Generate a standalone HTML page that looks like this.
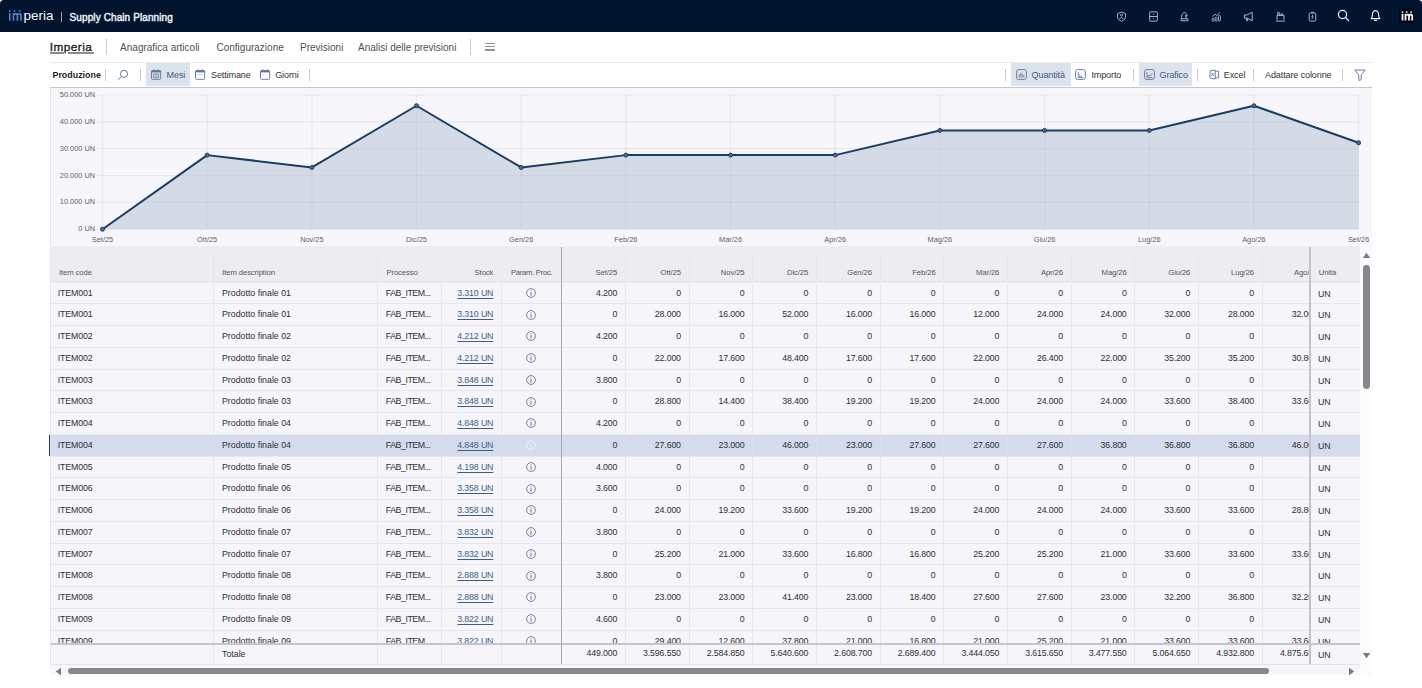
<!DOCTYPE html>
<html><head><meta charset="utf-8"><title>Supply Chain Planning</title>
<style>
*{box-sizing:border-box;margin:0;padding:0}
html,body{width:1422px;height:688px;overflow:hidden;background:#fff;font-family:"Liberation Sans",sans-serif;color:#2b2b2e}
.abs{position:absolute}
#hdr{position:absolute;left:0;top:0;width:1422px;height:31.6px;background:#03142e;border-radius:4px 4px 0 0}
.t{position:absolute;white-space:nowrap;line-height:1}
.hi{position:absolute;top:10px;width:12px;height:12px}
.vsep{position:absolute;width:1px;background:#c9c8cd}
.tb{position:absolute;top:62.8px;height:23.4px;background:#dde3ec}
.chartbox{position:absolute;left:50px;top:88px;width:1322px;height:157.4px;background:#f7f6fa}
.cl{position:absolute;font-size:7.4px;color:#5f5f64;white-space:nowrap;line-height:1}
.clip{position:absolute;overflow:hidden}
.cell{position:absolute;white-space:nowrap;line-height:1;font-size:8.8px;letter-spacing:-0.15px;color:#303034}
.hc{position:absolute;white-space:nowrap;line-height:1;font-size:7.7px;letter-spacing:-0.1px;color:#55555b}
.num{text-align:right;width:90px}
.lnk{color:#3d5e84;text-decoration:underline;text-underline-offset:1.5px;text-decoration-thickness:0.8px}
.hl{position:absolute;height:1px;background:#e8e7ec}
.vl{position:absolute;width:1px;background:#e8e7ec}
.info{position:absolute;width:10px;height:10px}
</style></head><body>

<div id="hdr">
<svg class="abs" style="left:8px;top:9px" width="16" height="13" viewBox="0 0 16 13"><g fill="#5a87c6"><rect x="1" y="4" width="1.5" height="7.7"/><circle cx="1.75" cy="1.9" r="0.85"/><path d="M4.7 11.7 V4 H6.3 V4.8 C7 4 8.6 3.8 9.4 4.5 C10.2 3.8 12.2 3.8 13 4.5 C13.7 5.1 13.8 5.8 13.8 6.6 V11.7 H12.2 V6.8 C12.2 5.4 10.2 5.4 10.2 6.8 V11.7 H8.6 V6.8 C8.6 5.4 6.3 5.4 6.3 6.8 V11.7 Z"/><circle cx="6.6" cy="1.9" r="0.85"/><circle cx="11.7" cy="1.9" r="0.85"/></g></svg>
<div class="t" style="left:23.4px;top:8.8px;font-size:13.5px;color:#f2f4f8">peria</div>
<div class="abs" style="left:60.5px;top:11.5px;width:1px;height:10px;background:#9aa3b3"></div>
<div class="t" style="left:69.6px;top:13.2px;font-size:10px;color:#e9edf3;letter-spacing:0.1px;-webkit-text-stroke:0.45px #e9edf3">Supply Chain Planning</div>
<svg class="abs" style="left:1116px;top:10.6px" width="11" height="11" viewBox="0 0 12 12"><path d="M6 1.2 L10.3 2.8 V6.2 C10.3 8.7 8.4 10.3 6 11.2 C3.6 10.3 1.7 8.7 1.7 6.2 V2.8 Z" fill="none" stroke="#b9c2d3" stroke-width="1"/><circle cx="6" cy="4.6" r="1.1" fill="none" stroke="#b9c2d3" stroke-width="0.9"/><path d="M4 8.6 C4.3 7 7.7 7 8 8.6" fill="none" stroke="#b9c2d3" stroke-width="0.9"/></svg>
<svg class="abs" style="left:1147.5px;top:10.6px" width="11" height="11" viewBox="0 0 12 12"><rect x="1.8" y="0.9" width="8.4" height="10.2" rx="1" fill="none" stroke="#b9c2d3" stroke-width="1"/><line x1="1.8" y1="6" x2="10.2" y2="6" stroke="#b9c2d3" stroke-width="1"/><line x1="5.3" y1="3.4" x2="6.7" y2="3.4" stroke="#b9c2d3" stroke-width="0.8"/><line x1="5.3" y1="8.5" x2="6.7" y2="8.5" stroke="#b9c2d3" stroke-width="0.8"/></svg>
<svg class="abs" style="left:1179.1px;top:10.6px" width="11" height="11" viewBox="0 0 12 12"><rect x="1.9" y="8.6" width="8.2" height="2.1" rx="0.8" fill="none" stroke="#b9c2d3" stroke-width="1"/><path d="M3.1 8.6 C2.5 6.6 2.7 4.3 4.3 2.6 L5.9 1 L8.9 4.3 V5.5 L6.9 5.1 L8.5 8.6" fill="none" stroke="#b9c2d3" stroke-width="1" stroke-linejoin="round"/></svg>
<svg class="abs" style="left:1210.5px;top:10.6px" width="11" height="11" viewBox="0 0 12 12"><rect x="1.3" y="7.8" width="2" height="3.4" rx="1" fill="none" stroke="#b9c2d3" stroke-width="0.9"/><rect x="4.6" y="6.8" width="2" height="4.4" rx="1" fill="none" stroke="#b9c2d3" stroke-width="0.9"/><rect x="8.2" y="4.8" width="2" height="6.4" rx="1" fill="none" stroke="#b9c2d3" stroke-width="0.9"/><path d="M1.5 6 L4.5 3.5 L6.5 5 L9.5 1.5" fill="none" stroke="#b9c2d3" stroke-width="0.9"/></svg>
<svg class="abs" style="left:1242.5px;top:10.6px" width="11" height="11" viewBox="0 0 12 12"><path d="M1.5 4.3 H4.3 L10 1.4 V10.6 L4.3 7.7 H1.5 Z" fill="none" stroke="#b9c2d3" stroke-width="1" stroke-linejoin="round"/><path d="M3.3 7.7 L4 10.8 H5.2 L4.8 7.9" fill="none" stroke="#b9c2d3" stroke-width="0.9"/></svg>
<svg class="abs" style="left:1274.5px;top:10.6px" width="11" height="11" viewBox="0 0 12 12"><path d="M1.2 11 H10.8 M2.2 9.8 V4.8 H9.8 V9.8 M3 4.8 V1.5 H4.4 L5 4.8 M6.5 4.8 V3 L9 4" fill="none" stroke="#b9c2d3" stroke-width="1" stroke-linejoin="round"/></svg>
<svg class="abs" style="left:1306.5px;top:10.6px" width="11" height="11" viewBox="0 0 12 12"><rect x="2.4" y="2.2" width="7.2" height="8.8" rx="1.4" fill="none" stroke="#b9c2d3" stroke-width="1"/><path d="M4.6 2.2 V1.4 H7.4 V2.2 M6.7 4 L5.2 6.3 H6.8 L5.3 8.8" fill="none" stroke="#b9c2d3" stroke-width="0.9"/></svg>
<svg class="abs" style="left:1337.3px;top:8.6px" width="13" height="13" viewBox="0 0 13 13"><circle cx="5.5" cy="5.5" r="4.1" fill="none" stroke="#f1f3f7" stroke-width="1.25"/><line x1="8.5" y1="8.5" x2="11.6" y2="11.6" stroke="#f1f3f7" stroke-width="1.3" stroke-linecap="round"/></svg>
<svg class="abs" style="left:1369px;top:8.6px" width="13" height="13" viewBox="0 0 13 13"><path d="M2.2 9.6 C3.3 8.6 3.4 7.6 3.4 5.8 C3.4 3.5 4.8 1.6 6.5 1.6 C8.2 1.6 9.6 3.5 9.6 5.8 C9.6 7.6 9.7 8.6 10.8 9.6 Z" fill="none" stroke="#f1f3f7" stroke-width="1.2" stroke-linejoin="round"/><path d="M5.3 10.9 C5.8 11.7 7.2 11.7 7.7 10.9" fill="none" stroke="#f1f3f7" stroke-width="1.1"/></svg>
<div class="abs" style="left:1399.3px;top:8px;width:15px;height:15px;background:#010a18;border-radius:1px"></div>
<svg class="abs" style="left:1400.5px;top:10.5px" width="13" height="10" viewBox="0 0 13 10"><g fill="#f4f6fa"><rect x="0.6" y="2.8" width="1.8" height="6.6"/><circle cx="1.5" cy="1.1" r="0.95"/><path d="M3.6 9.4 V2.8 H5.3 V3.4 C6 2.7 7.4 2.6 8 3.2 C8.8 2.6 10.6 2.6 11.3 3.2 C11.9 3.7 12.1 4.4 12.1 5.1 V9.4 H10.3 V5.3 C10.3 4.3 8.9 4.3 8.9 5.3 V9.4 H7.1 V5.3 C7.1 4.3 5.4 4.3 5.4 5.3 V9.4 Z"/><circle cx="5.7" cy="1.1" r="0.95"/><circle cx="10.2" cy="1.1" r="0.95"/></g></svg>
</div>
<div class="t" style="left:49.8px;top:41.8px;font-size:11.8px;letter-spacing:0.45px;-webkit-text-stroke:0.35px #232327;color:#232327">Imperia</div>
<div class="abs" style="left:50px;top:52.2px;width:13.8px;height:1.4px;background:#8c8c90"></div>
<div class="abs" style="left:68px;top:52.2px;width:25.5px;height:1.4px;background:#8c8c90"></div>
<div class="vsep" style="left:105.9px;top:39px;height:16px"></div>
<div class="t" style="left:120.1px;top:43px;font-size:10px;color:#505056">Anagrafica articoli</div>
<div class="t" style="left:216.5px;top:43px;font-size:10px;color:#505056">Configurazione</div>
<div class="t" style="left:300px;top:43px;font-size:10px;color:#505056">Previsioni</div>
<div class="t" style="left:358px;top:43px;font-size:10px;color:#505056">Analisi delle previsioni</div>
<div class="vsep" style="left:469.5px;top:39px;height:16px"></div>
<div class="abs" style="left:484.8px;top:42.7px;width:10.2px;height:1.4px;background:#8d929c"></div>
<div class="abs" style="left:484.8px;top:46px;width:10.2px;height:1.4px;background:#8d929c"></div>
<div class="abs" style="left:484.8px;top:49.3px;width:10.2px;height:1.4px;background:#8d929c"></div>
<div class="abs" style="left:50px;top:62px;width:1322px;height:1px;background:#ececf0"></div>
<div class="t" style="left:52.5px;top:71px;font-size:8.9px;font-weight:bold;color:#1f1f23">Produzione</div>
<div class="vsep" style="left:105.2px;top:69px;height:12px"></div>
<svg class="abs" style="left:117px;top:68.5px" width="12" height="12" viewBox="0 0 12 12"><circle cx="7" cy="4.8" r="3.6" fill="none" stroke="#5a6e8a" stroke-width="0.9"/><line x1="4.4" y1="7.4" x2="1.2" y2="10.8" stroke="#5a6e8a" stroke-width="0.9"/></svg>
<div class="vsep" style="left:140.2px;top:69px;height:12px"></div>
<div class="tb" style="left:146.1px;width:43.7px"></div>
<svg class="abs" style="left:150.8px;top:69.2px" width="11" height="11" viewBox="0 0 11 11"><rect x="0.5" y="1.5" width="9.2" height="8.8" rx="0.9" fill="none" stroke="#5b7598" stroke-width="0.9"/><rect x="0.5" y="1.9" width="9.2" height="1.5" fill="#5b7598"/><line x1="2.8" y1="0.3" x2="2.8" y2="2" stroke="#5b7598" stroke-width="0.9"/><line x1="7.4" y1="0.3" x2="7.4" y2="2" stroke="#5b7598" stroke-width="0.9"/><path d="M2.4 4.9 H7.8 V8.6 H2.4 Z M4.2 4.9 V8.6 M6 4.9 V8.6" fill="none" stroke="#5b7598" stroke-width="0.6"/></svg>
<div class="t" style="left:166.6px;top:71.2px;font-size:9.05px;letter-spacing:-0.12px;color:#3d5a82">Mesi</div>
<svg class="abs" style="left:194.9px;top:69.2px" width="11" height="11" viewBox="0 0 11 11"><rect x="0.5" y="1.5" width="9.2" height="8.8" rx="0.9" fill="none" stroke="#5b7598" stroke-width="0.9"/><rect x="0.5" y="1.9" width="9.2" height="1.5" fill="#5b7598"/><line x1="2.8" y1="0.3" x2="2.8" y2="2" stroke="#5b7598" stroke-width="0.9"/><line x1="7.4" y1="0.3" x2="7.4" y2="2" stroke="#5b7598" stroke-width="0.9"/><path d="M2.6 5.4 H3.3 M4.6 5.4 H5.3 M6.6 5.4 H7.3" stroke="#5b7598" stroke-width="0.8"/></svg>
<div class="t" style="left:211px;top:71.2px;font-size:9.05px;letter-spacing:-0.12px;color:#333338">Settimane</div>
<svg class="abs" style="left:260px;top:69.2px" width="11" height="11" viewBox="0 0 11 11"><rect x="0.5" y="1.5" width="9.2" height="8.8" rx="0.9" fill="none" stroke="#5b7598" stroke-width="0.9"/><rect x="0.5" y="1.9" width="9.2" height="1.5" fill="#5b7598"/><line x1="2.8" y1="0.3" x2="2.8" y2="2" stroke="#5b7598" stroke-width="0.9"/><line x1="7.4" y1="0.3" x2="7.4" y2="2" stroke="#5b7598" stroke-width="0.9"/><path d="M2.6 5.4 H3.4" stroke="#5b7598" stroke-width="0.8"/></svg>
<div class="t" style="left:275.2px;top:71.2px;font-size:9.05px;letter-spacing:-0.12px;color:#333338">Giorni</div>
<div class="vsep" style="left:309.3px;top:69px;height:12px"></div>
<div class="vsep" style="left:1005.4px;top:69px;height:12px"></div>
<div class="tb" style="left:1011.3px;width:59.7px"></div>
<svg class="abs" style="left:1015.6px;top:69px" width="11" height="11" viewBox="0 0 11 11"><rect x="0.6" y="0.6" width="9.8" height="9.8" rx="2" fill="none" stroke="#5b7598" stroke-width="0.9"/><path d="M3.3 8.6 V5.2 M4.8 8.6 V3.6 M6.3 8.6 V4.6 M7.8 8.6 V6" stroke="#5b7598" stroke-width="0.8"/></svg>
<div class="t" style="left:1031.6px;top:71.2px;font-size:9.05px;letter-spacing:-0.12px;color:#3d5a82">Quantità</div>
<svg class="abs" style="left:1075px;top:69px" width="11" height="11" viewBox="0 0 11 11"><rect x="0.6" y="0.6" width="9.8" height="9.8" rx="2" fill="none" stroke="#5b7598" stroke-width="0.9"/><path d="M3.3 3 V8.6 H8.4 M4.8 8.6 V5.6 M6.3 8.6 V6.8" stroke="#5b7598" stroke-width="0.8" fill="none"/></svg>
<div class="t" style="left:1091.4px;top:71.2px;font-size:9.05px;letter-spacing:-0.12px;color:#333338">Importo</div>
<div class="vsep" style="left:1132.7px;top:69px;height:12px"></div>
<div class="tb" style="left:1139.2px;width:52.8px"></div>
<svg class="abs" style="left:1144px;top:69px" width="11" height="11" viewBox="0 0 11 11"><rect x="0.6" y="0.6" width="9.8" height="9.8" rx="2" fill="none" stroke="#5b7598" stroke-width="0.9"/><path d="M3 8.4 L4.8 6 L6.2 7.2 L8.2 4.4 M3 3 V8.6 H8.6" stroke="#5b7598" stroke-width="0.8" fill="none"/></svg>
<div class="t" style="left:1159.6px;top:71.2px;font-size:9.05px;letter-spacing:-0.12px;color:#3d5a82">Grafico</div>
<div class="vsep" style="left:1197px;top:69px;height:12px"></div>
<svg class="abs" style="left:1208.5px;top:69px" width="11" height="11" viewBox="0 0 11 11"><path d="M1 2 L6.2 1 V10 L1 9 Z" fill="none" stroke="#5b7598" stroke-width="0.9" stroke-linejoin="round"/><path d="M6.2 2.2 H9.6 V8.8 H6.2" fill="none" stroke="#5b7598" stroke-width="0.9"/><path d="M2.6 3.8 L4.6 7 M4.6 3.8 L2.6 7" stroke="#5b7598" stroke-width="0.8"/></svg>
<div class="t" style="left:1223.8px;top:71.2px;font-size:9.05px;letter-spacing:-0.12px;color:#333338">Excel</div>
<div class="vsep" style="left:1253.2px;top:69px;height:12px"></div>
<div class="t" style="left:1265px;top:71.2px;font-size:9.05px;letter-spacing:-0.12px;color:#333338">Adattare colonne</div>
<div class="vsep" style="left:1342.1px;top:69px;height:12px"></div>
<svg class="abs" style="left:1354px;top:68.5px" width="12" height="12" viewBox="0 0 12 12"><path d="M0.8 1 H11.2 L7.2 6 V10.8 L4.8 11.4 V6 Z" fill="none" stroke="#5b7598" stroke-width="0.9" stroke-linejoin="round"/></svg>
<div class="abs" style="left:50px;top:86.6px;width:1322px;height:1.6px;background:#c6c5ca"></div>
<div class="chartbox"></div>
<svg class="abs" style="left:0;top:0" width="1422" height="260" viewBox="0 0 1422 260"><polygon points="102.5,229.2 102.5,229.2 207.18,155.12 311.85,167.47 416.52,105.74 521.2,167.47 625.88,155.12 730.55,155.12 835.22,155.12 939.9,130.43 1044.57,130.43 1149.25,130.43 1253.92,105.74 1358.6,142.78 1358.6,229.2" fill="#d4dbe7"/><line x1="97" y1="229.2" x2="1358.6" y2="229.2" stroke="#a9a8b8" stroke-opacity="0.17" stroke-width="1.2"/><line x1="97" y1="202.36" x2="1358.6" y2="202.36" stroke="#a9a8b8" stroke-opacity="0.17" stroke-width="1.2"/><line x1="97" y1="175.52" x2="1358.6" y2="175.52" stroke="#a9a8b8" stroke-opacity="0.17" stroke-width="1.2"/><line x1="97" y1="148.68" x2="1358.6" y2="148.68" stroke="#a9a8b8" stroke-opacity="0.17" stroke-width="1.2"/><line x1="97" y1="121.84" x2="1358.6" y2="121.84" stroke="#a9a8b8" stroke-opacity="0.17" stroke-width="1.2"/><line x1="97" y1="95" x2="1358.6" y2="95" stroke="#a9a8b8" stroke-opacity="0.17" stroke-width="1.2"/><line x1="102.5" y1="95" x2="102.5" y2="229.2" stroke="#a9a8b8" stroke-opacity="0.17" stroke-width="1.2"/><line x1="207.18" y1="95" x2="207.18" y2="229.2" stroke="#a9a8b8" stroke-opacity="0.17" stroke-width="1.2"/><line x1="311.85" y1="95" x2="311.85" y2="229.2" stroke="#a9a8b8" stroke-opacity="0.17" stroke-width="1.2"/><line x1="416.52" y1="95" x2="416.52" y2="229.2" stroke="#a9a8b8" stroke-opacity="0.17" stroke-width="1.2"/><line x1="521.2" y1="95" x2="521.2" y2="229.2" stroke="#a9a8b8" stroke-opacity="0.17" stroke-width="1.2"/><line x1="625.88" y1="95" x2="625.88" y2="229.2" stroke="#a9a8b8" stroke-opacity="0.17" stroke-width="1.2"/><line x1="730.55" y1="95" x2="730.55" y2="229.2" stroke="#a9a8b8" stroke-opacity="0.17" stroke-width="1.2"/><line x1="835.22" y1="95" x2="835.22" y2="229.2" stroke="#a9a8b8" stroke-opacity="0.17" stroke-width="1.2"/><line x1="939.9" y1="95" x2="939.9" y2="229.2" stroke="#a9a8b8" stroke-opacity="0.17" stroke-width="1.2"/><line x1="1044.57" y1="95" x2="1044.57" y2="229.2" stroke="#a9a8b8" stroke-opacity="0.17" stroke-width="1.2"/><line x1="1149.25" y1="95" x2="1149.25" y2="229.2" stroke="#a9a8b8" stroke-opacity="0.17" stroke-width="1.2"/><line x1="1253.92" y1="95" x2="1253.92" y2="229.2" stroke="#a9a8b8" stroke-opacity="0.17" stroke-width="1.2"/><line x1="1358.6" y1="95" x2="1358.6" y2="229.2" stroke="#a9a8b8" stroke-opacity="0.17" stroke-width="1.2"/><polyline points="102.5,229.2 207.18,155.12 311.85,167.47 416.52,105.74 521.2,167.47 625.88,155.12 730.55,155.12 835.22,155.12 939.9,130.43 1044.57,130.43 1149.25,130.43 1253.92,105.74 1358.6,142.78" fill="none" stroke="#1b3d63" stroke-width="2" stroke-linejoin="round"/><circle cx="102.5" cy="229.2" r="2" fill="#4f6a8c" stroke="#1b3d63" stroke-width="1"/><circle cx="207.18" cy="155.12" r="2" fill="#4f6a8c" stroke="#1b3d63" stroke-width="1"/><circle cx="311.85" cy="167.47" r="2" fill="#4f6a8c" stroke="#1b3d63" stroke-width="1"/><circle cx="416.52" cy="105.74" r="2" fill="#4f6a8c" stroke="#1b3d63" stroke-width="1"/><circle cx="521.2" cy="167.47" r="2" fill="#4f6a8c" stroke="#1b3d63" stroke-width="1"/><circle cx="625.88" cy="155.12" r="2" fill="#4f6a8c" stroke="#1b3d63" stroke-width="1"/><circle cx="730.55" cy="155.12" r="2" fill="#4f6a8c" stroke="#1b3d63" stroke-width="1"/><circle cx="835.22" cy="155.12" r="2" fill="#4f6a8c" stroke="#1b3d63" stroke-width="1"/><circle cx="939.9" cy="130.43" r="2" fill="#4f6a8c" stroke="#1b3d63" stroke-width="1"/><circle cx="1044.57" cy="130.43" r="2" fill="#4f6a8c" stroke="#1b3d63" stroke-width="1"/><circle cx="1149.25" cy="130.43" r="2" fill="#4f6a8c" stroke="#1b3d63" stroke-width="1"/><circle cx="1253.92" cy="105.74" r="2" fill="#4f6a8c" stroke="#1b3d63" stroke-width="1"/><circle cx="1358.6" cy="142.78" r="2" fill="#4f6a8c" stroke="#1b3d63" stroke-width="1"/></svg>
<div class="cl" style="left:0;width:95.2px;text-align:right;top:225.3px">0 UN</div>
<div class="cl" style="left:0;width:95.2px;text-align:right;top:198.46px">10.000 UN</div>
<div class="cl" style="left:0;width:95.2px;text-align:right;top:171.62px">20.000 UN</div>
<div class="cl" style="left:0;width:95.2px;text-align:right;top:144.78px">30.000 UN</div>
<div class="cl" style="left:0;width:95.2px;text-align:right;top:117.94px">40.000 UN</div>
<div class="cl" style="left:0;width:95.2px;text-align:right;top:91.1px">50.000 UN</div>
<div class="cl" style="left:72.5px;width:60px;text-align:center;top:236.2px">Set/25</div>
<div class="cl" style="left:177.18px;width:60px;text-align:center;top:236.2px">Ott/25</div>
<div class="cl" style="left:281.85px;width:60px;text-align:center;top:236.2px">Nov/25</div>
<div class="cl" style="left:386.52px;width:60px;text-align:center;top:236.2px">Dic/25</div>
<div class="cl" style="left:491.2px;width:60px;text-align:center;top:236.2px">Gen/26</div>
<div class="cl" style="left:595.88px;width:60px;text-align:center;top:236.2px">Feb/26</div>
<div class="cl" style="left:700.55px;width:60px;text-align:center;top:236.2px">Mar/26</div>
<div class="cl" style="left:805.22px;width:60px;text-align:center;top:236.2px">Apr/26</div>
<div class="cl" style="left:909.9px;width:60px;text-align:center;top:236.2px">Mag/26</div>
<div class="cl" style="left:1014.57px;width:60px;text-align:center;top:236.2px">Giu/26</div>
<div class="cl" style="left:1119.25px;width:60px;text-align:center;top:236.2px">Lug/26</div>
<div class="cl" style="left:1223.92px;width:60px;text-align:center;top:236.2px">Ago/26</div>
<div class="cl" style="left:1328.6px;width:60px;text-align:center;top:236.2px">Set/26</div>
<div class="abs" style="left:50px;top:245.4px;width:1322px;height:429.6px;background:#f7f6f9"></div>
<div class="abs" style="left:50px;top:245.4px;width:1310px;height:37.3px;background:#edecf0"></div>
<div class="abs" style="left:50px;top:282.7px;width:1310px;height:360.9px;background:#f6f5f9"></div>
<div class="abs" style="left:50px;top:281.1px;width:1310px;height:1px;background:#e3e2e7"></div>
<div class="hl" style="left:50px;top:303.25px;width:1310px"></div>
<div class="hl" style="left:50px;top:325px;width:1310px"></div>
<div class="hl" style="left:50px;top:346.75px;width:1310px"></div>
<div class="hl" style="left:50px;top:368.5px;width:1310px"></div>
<div class="hl" style="left:50px;top:390.25px;width:1310px"></div>
<div class="hl" style="left:50px;top:412px;width:1310px"></div>
<div class="hl" style="left:50px;top:433.75px;width:1310px"></div>
<div class="hl" style="left:50px;top:455.5px;width:1310px"></div>
<div class="hl" style="left:50px;top:477.25px;width:1310px"></div>
<div class="hl" style="left:50px;top:499px;width:1310px"></div>
<div class="hl" style="left:50px;top:520.75px;width:1310px"></div>
<div class="hl" style="left:50px;top:542.5px;width:1310px"></div>
<div class="hl" style="left:50px;top:564.25px;width:1310px"></div>
<div class="hl" style="left:50px;top:586px;width:1310px"></div>
<div class="hl" style="left:50px;top:607.75px;width:1310px"></div>
<div class="hl" style="left:50px;top:629.5px;width:1310px"></div>
<div class="vl" style="left:213.3px;top:282.7px;height:381.3px"></div>
<div class="vl" style="left:376.8px;top:282.7px;height:381.3px"></div>
<div class="vl" style="left:440.7px;top:282.7px;height:381.3px"></div>
<div class="vl" style="left:501px;top:282.7px;height:381.3px"></div>
<div class="vl" style="left:624.9px;top:282.7px;height:381.3px"></div>
<div class="vl" style="left:688.58px;top:282.7px;height:381.3px"></div>
<div class="vl" style="left:752.26px;top:282.7px;height:381.3px"></div>
<div class="vl" style="left:815.94px;top:282.7px;height:381.3px"></div>
<div class="vl" style="left:879.62px;top:282.7px;height:381.3px"></div>
<div class="vl" style="left:943.3px;top:282.7px;height:381.3px"></div>
<div class="vl" style="left:1006.98px;top:282.7px;height:381.3px"></div>
<div class="vl" style="left:1070.66px;top:282.7px;height:381.3px"></div>
<div class="vl" style="left:1134.34px;top:282.7px;height:381.3px"></div>
<div class="vl" style="left:1198.02px;top:282.7px;height:381.3px"></div>
<div class="vl" style="left:1261.7px;top:282.7px;height:381.3px"></div>
<div class="abs" style="left:50px;top:434.75px;width:1310px;height:20.85px;background:#d3dbec"></div>
<div class="vl" style="left:213.3px;top:434.75px;height:21.75px;background:#d8dff0"></div>
<div class="vl" style="left:376.8px;top:434.75px;height:21.75px;background:#d8dff0"></div>
<div class="vl" style="left:440.7px;top:434.75px;height:21.75px;background:#d8dff0"></div>
<div class="vl" style="left:501px;top:434.75px;height:21.75px;background:#d8dff0"></div>
<div class="vl" style="left:624.9px;top:434.75px;height:21.75px;background:#d8dff0"></div>
<div class="vl" style="left:688.58px;top:434.75px;height:21.75px;background:#d8dff0"></div>
<div class="vl" style="left:752.26px;top:434.75px;height:21.75px;background:#d8dff0"></div>
<div class="vl" style="left:815.94px;top:434.75px;height:21.75px;background:#d8dff0"></div>
<div class="vl" style="left:879.62px;top:434.75px;height:21.75px;background:#d8dff0"></div>
<div class="vl" style="left:943.3px;top:434.75px;height:21.75px;background:#d8dff0"></div>
<div class="vl" style="left:1006.98px;top:434.75px;height:21.75px;background:#d8dff0"></div>
<div class="vl" style="left:1070.66px;top:434.75px;height:21.75px;background:#d8dff0"></div>
<div class="vl" style="left:1134.34px;top:434.75px;height:21.75px;background:#d8dff0"></div>
<div class="vl" style="left:1198.02px;top:434.75px;height:21.75px;background:#d8dff0"></div>
<div class="vl" style="left:1261.7px;top:434.75px;height:21.75px;background:#d8dff0"></div>
<div class="abs" style="left:49.2px;top:434.75px;width:1.7px;height:20.85px;background:#1c3a5e"></div>
<div class="vl" style="left:213.3px;top:256px;height:26px;background:#e6e5ea"></div>
<div class="vl" style="left:376.8px;top:256px;height:26px;background:#e6e5ea"></div>
<div class="vl" style="left:624.9px;top:256px;height:26px;background:#e6e5ea"></div>
<div class="vl" style="left:688.58px;top:256px;height:26px;background:#e6e5ea"></div>
<div class="vl" style="left:752.26px;top:256px;height:26px;background:#e6e5ea"></div>
<div class="vl" style="left:815.94px;top:256px;height:26px;background:#e6e5ea"></div>
<div class="vl" style="left:879.62px;top:256px;height:26px;background:#e6e5ea"></div>
<div class="vl" style="left:943.3px;top:256px;height:26px;background:#e6e5ea"></div>
<div class="vl" style="left:1006.98px;top:256px;height:26px;background:#e6e5ea"></div>
<div class="vl" style="left:1070.66px;top:256px;height:26px;background:#e6e5ea"></div>
<div class="vl" style="left:1134.34px;top:256px;height:26px;background:#e6e5ea"></div>
<div class="vl" style="left:1198.02px;top:256px;height:26px;background:#e6e5ea"></div>
<div class="vl" style="left:1261.7px;top:256px;height:26px;background:#e6e5ea"></div>
<div class="hc" style="left:59px;top:268.9px">Item code</div>
<div class="hc" style="left:222.2px;top:268.9px">Item description</div>
<div class="hc" style="left:386.4px;top:268.9px">Processo</div>
<div class="hc num" style="left:403.3px;top:268.9px">Stock</div>
<div class="hc" style="left:511px;top:268.9px;letter-spacing:-0.3px">Param. Proc.</div>
<div class="clip" style="left:562px;top:264.9px;width:748px;height:20px">
<div class="hc num" style="left:-34.8px;top:4px">Set/25</div>
<div class="hc num" style="left:28.88px;top:4px">Ott/25</div>
<div class="hc num" style="left:92.56px;top:4px">Nov/25</div>
<div class="hc num" style="left:156.24px;top:4px">Dic/25</div>
<div class="hc num" style="left:219.92px;top:4px">Gen/26</div>
<div class="hc num" style="left:283.6px;top:4px">Feb/26</div>
<div class="hc num" style="left:347.28px;top:4px">Mar/26</div>
<div class="hc num" style="left:410.96px;top:4px">Apr/26</div>
<div class="hc num" style="left:474.64px;top:4px">Mag/26</div>
<div class="hc num" style="left:538.32px;top:4px">Giu/26</div>
<div class="hc num" style="left:602px;top:4px">Lug/26</div>
<div class="hc num" style="left:665.68px;top:4px">Ago/26</div>
</div>
<div class="hc" style="left:1318.7px;top:268.9px">Unità</div>
<div class="clip" style="left:0;top:282.7px;width:1422px;height:360.9px">
<div class="cell" style="left:57.8px;top:5.95px">ITEM001</div>
<div class="cell" style="left:222px;top:5.95px;letter-spacing:0px">Prodotto finale 01</div>
<div class="cell" style="left:385.7px;top:5.95px;letter-spacing:-0.45px">FAB_ITEM...</div>
<div class="cell num lnk" style="left:403.3px;top:5.95px">3.310 UN</div>
<svg class="info" style="left:525.9px;top:5.3px" viewBox="0 0 10 10"><circle cx="5" cy="5" r="4.4" fill="none" stroke="#4f6888" stroke-width="0.8"/><line x1="5" y1="4.2" x2="5" y2="7.6" stroke="#4f6888" stroke-width="0.9"/><circle cx="5" cy="2.7" r="0.55" fill="#4f6888"/></svg>
<div class="cell" style="left:1318px;top:6.95px">UN</div>
<div class="cell" style="left:57.8px;top:27.7px">ITEM001</div>
<div class="cell" style="left:222px;top:27.7px;letter-spacing:0px">Prodotto finale 01</div>
<div class="cell" style="left:385.7px;top:27.7px;letter-spacing:-0.45px">FAB_ITEM...</div>
<div class="cell num lnk" style="left:403.3px;top:27.7px">3.310 UN</div>
<svg class="info" style="left:525.9px;top:27.05px" viewBox="0 0 10 10"><circle cx="5" cy="5" r="4.4" fill="none" stroke="#4f6888" stroke-width="0.8"/><line x1="5" y1="4.2" x2="5" y2="7.6" stroke="#4f6888" stroke-width="0.9"/><circle cx="5" cy="2.7" r="0.55" fill="#4f6888"/></svg>
<div class="cell" style="left:1318px;top:28.7px">UN</div>
<div class="cell" style="left:57.8px;top:49.45px">ITEM002</div>
<div class="cell" style="left:222px;top:49.45px;letter-spacing:0px">Prodotto finale 02</div>
<div class="cell" style="left:385.7px;top:49.45px;letter-spacing:-0.45px">FAB_ITEM...</div>
<div class="cell num lnk" style="left:403.3px;top:49.45px">4.212 UN</div>
<svg class="info" style="left:525.9px;top:48.8px" viewBox="0 0 10 10"><circle cx="5" cy="5" r="4.4" fill="none" stroke="#4f6888" stroke-width="0.8"/><line x1="5" y1="4.2" x2="5" y2="7.6" stroke="#4f6888" stroke-width="0.9"/><circle cx="5" cy="2.7" r="0.55" fill="#4f6888"/></svg>
<div class="cell" style="left:1318px;top:50.45px">UN</div>
<div class="cell" style="left:57.8px;top:71.2px">ITEM002</div>
<div class="cell" style="left:222px;top:71.2px;letter-spacing:0px">Prodotto finale 02</div>
<div class="cell" style="left:385.7px;top:71.2px;letter-spacing:-0.45px">FAB_ITEM...</div>
<div class="cell num lnk" style="left:403.3px;top:71.2px">4.212 UN</div>
<svg class="info" style="left:525.9px;top:70.55px" viewBox="0 0 10 10"><circle cx="5" cy="5" r="4.4" fill="none" stroke="#4f6888" stroke-width="0.8"/><line x1="5" y1="4.2" x2="5" y2="7.6" stroke="#4f6888" stroke-width="0.9"/><circle cx="5" cy="2.7" r="0.55" fill="#4f6888"/></svg>
<div class="cell" style="left:1318px;top:72.2px">UN</div>
<div class="cell" style="left:57.8px;top:92.95px">ITEM003</div>
<div class="cell" style="left:222px;top:92.95px;letter-spacing:0px">Prodotto finale 03</div>
<div class="cell" style="left:385.7px;top:92.95px;letter-spacing:-0.45px">FAB_ITEM...</div>
<div class="cell num lnk" style="left:403.3px;top:92.95px">3.848 UN</div>
<svg class="info" style="left:525.9px;top:92.3px" viewBox="0 0 10 10"><circle cx="5" cy="5" r="4.4" fill="none" stroke="#4f6888" stroke-width="0.8"/><line x1="5" y1="4.2" x2="5" y2="7.6" stroke="#4f6888" stroke-width="0.9"/><circle cx="5" cy="2.7" r="0.55" fill="#4f6888"/></svg>
<div class="cell" style="left:1318px;top:93.95px">UN</div>
<div class="cell" style="left:57.8px;top:114.7px">ITEM003</div>
<div class="cell" style="left:222px;top:114.7px;letter-spacing:0px">Prodotto finale 03</div>
<div class="cell" style="left:385.7px;top:114.7px;letter-spacing:-0.45px">FAB_ITEM...</div>
<div class="cell num lnk" style="left:403.3px;top:114.7px">3.848 UN</div>
<svg class="info" style="left:525.9px;top:114.05px" viewBox="0 0 10 10"><circle cx="5" cy="5" r="4.4" fill="none" stroke="#4f6888" stroke-width="0.8"/><line x1="5" y1="4.2" x2="5" y2="7.6" stroke="#4f6888" stroke-width="0.9"/><circle cx="5" cy="2.7" r="0.55" fill="#4f6888"/></svg>
<div class="cell" style="left:1318px;top:115.7px">UN</div>
<div class="cell" style="left:57.8px;top:136.45px">ITEM004</div>
<div class="cell" style="left:222px;top:136.45px;letter-spacing:0px">Prodotto finale 04</div>
<div class="cell" style="left:385.7px;top:136.45px;letter-spacing:-0.45px">FAB_ITEM...</div>
<div class="cell num lnk" style="left:403.3px;top:136.45px">4.848 UN</div>
<svg class="info" style="left:525.9px;top:135.8px" viewBox="0 0 10 10"><circle cx="5" cy="5" r="4.4" fill="none" stroke="#4f6888" stroke-width="0.8"/><line x1="5" y1="4.2" x2="5" y2="7.6" stroke="#4f6888" stroke-width="0.9"/><circle cx="5" cy="2.7" r="0.55" fill="#4f6888"/></svg>
<div class="cell" style="left:1318px;top:137.45px">UN</div>
<div class="cell" style="left:57.8px;top:158.2px">ITEM004</div>
<div class="cell" style="left:222px;top:158.2px;letter-spacing:0px">Prodotto finale 04</div>
<div class="cell" style="left:385.7px;top:158.2px;letter-spacing:-0.45px">FAB_ITEM...</div>
<div class="cell num lnk" style="left:403.3px;top:158.2px">4.848 UN</div>
<svg class="info" style="left:525.9px;top:157.55px" viewBox="0 0 10 10"><circle cx="5" cy="5" r="4.4" fill="none" stroke="#f4f6fb" stroke-width="0.8"/><line x1="5" y1="4.2" x2="5" y2="7.6" stroke="#f4f6fb" stroke-width="0.9"/><circle cx="5" cy="2.7" r="0.55" fill="#f4f6fb"/></svg>
<div class="cell" style="left:1318px;top:159.2px">UN</div>
<div class="cell" style="left:57.8px;top:179.95px">ITEM005</div>
<div class="cell" style="left:222px;top:179.95px;letter-spacing:0px">Prodotto finale 05</div>
<div class="cell" style="left:385.7px;top:179.95px;letter-spacing:-0.45px">FAB_ITEM...</div>
<div class="cell num lnk" style="left:403.3px;top:179.95px">4.198 UN</div>
<svg class="info" style="left:525.9px;top:179.3px" viewBox="0 0 10 10"><circle cx="5" cy="5" r="4.4" fill="none" stroke="#4f6888" stroke-width="0.8"/><line x1="5" y1="4.2" x2="5" y2="7.6" stroke="#4f6888" stroke-width="0.9"/><circle cx="5" cy="2.7" r="0.55" fill="#4f6888"/></svg>
<div class="cell" style="left:1318px;top:180.95px">UN</div>
<div class="cell" style="left:57.8px;top:201.7px">ITEM006</div>
<div class="cell" style="left:222px;top:201.7px;letter-spacing:0px">Prodotto finale 06</div>
<div class="cell" style="left:385.7px;top:201.7px;letter-spacing:-0.45px">FAB_ITEM...</div>
<div class="cell num lnk" style="left:403.3px;top:201.7px">3.358 UN</div>
<svg class="info" style="left:525.9px;top:201.05px" viewBox="0 0 10 10"><circle cx="5" cy="5" r="4.4" fill="none" stroke="#4f6888" stroke-width="0.8"/><line x1="5" y1="4.2" x2="5" y2="7.6" stroke="#4f6888" stroke-width="0.9"/><circle cx="5" cy="2.7" r="0.55" fill="#4f6888"/></svg>
<div class="cell" style="left:1318px;top:202.7px">UN</div>
<div class="cell" style="left:57.8px;top:223.45px">ITEM006</div>
<div class="cell" style="left:222px;top:223.45px;letter-spacing:0px">Prodotto finale 06</div>
<div class="cell" style="left:385.7px;top:223.45px;letter-spacing:-0.45px">FAB_ITEM...</div>
<div class="cell num lnk" style="left:403.3px;top:223.45px">3.358 UN</div>
<svg class="info" style="left:525.9px;top:222.8px" viewBox="0 0 10 10"><circle cx="5" cy="5" r="4.4" fill="none" stroke="#4f6888" stroke-width="0.8"/><line x1="5" y1="4.2" x2="5" y2="7.6" stroke="#4f6888" stroke-width="0.9"/><circle cx="5" cy="2.7" r="0.55" fill="#4f6888"/></svg>
<div class="cell" style="left:1318px;top:224.45px">UN</div>
<div class="cell" style="left:57.8px;top:245.2px">ITEM007</div>
<div class="cell" style="left:222px;top:245.2px;letter-spacing:0px">Prodotto finale 07</div>
<div class="cell" style="left:385.7px;top:245.2px;letter-spacing:-0.45px">FAB_ITEM...</div>
<div class="cell num lnk" style="left:403.3px;top:245.2px">3.832 UN</div>
<svg class="info" style="left:525.9px;top:244.55px" viewBox="0 0 10 10"><circle cx="5" cy="5" r="4.4" fill="none" stroke="#4f6888" stroke-width="0.8"/><line x1="5" y1="4.2" x2="5" y2="7.6" stroke="#4f6888" stroke-width="0.9"/><circle cx="5" cy="2.7" r="0.55" fill="#4f6888"/></svg>
<div class="cell" style="left:1318px;top:246.2px">UN</div>
<div class="cell" style="left:57.8px;top:266.95px">ITEM007</div>
<div class="cell" style="left:222px;top:266.95px;letter-spacing:0px">Prodotto finale 07</div>
<div class="cell" style="left:385.7px;top:266.95px;letter-spacing:-0.45px">FAB_ITEM...</div>
<div class="cell num lnk" style="left:403.3px;top:266.95px">3.832 UN</div>
<svg class="info" style="left:525.9px;top:266.3px" viewBox="0 0 10 10"><circle cx="5" cy="5" r="4.4" fill="none" stroke="#4f6888" stroke-width="0.8"/><line x1="5" y1="4.2" x2="5" y2="7.6" stroke="#4f6888" stroke-width="0.9"/><circle cx="5" cy="2.7" r="0.55" fill="#4f6888"/></svg>
<div class="cell" style="left:1318px;top:267.95px">UN</div>
<div class="cell" style="left:57.8px;top:288.7px">ITEM008</div>
<div class="cell" style="left:222px;top:288.7px;letter-spacing:0px">Prodotto finale 08</div>
<div class="cell" style="left:385.7px;top:288.7px;letter-spacing:-0.45px">FAB_ITEM...</div>
<div class="cell num lnk" style="left:403.3px;top:288.7px">2.888 UN</div>
<svg class="info" style="left:525.9px;top:288.05px" viewBox="0 0 10 10"><circle cx="5" cy="5" r="4.4" fill="none" stroke="#4f6888" stroke-width="0.8"/><line x1="5" y1="4.2" x2="5" y2="7.6" stroke="#4f6888" stroke-width="0.9"/><circle cx="5" cy="2.7" r="0.55" fill="#4f6888"/></svg>
<div class="cell" style="left:1318px;top:289.7px">UN</div>
<div class="cell" style="left:57.8px;top:310.45px">ITEM008</div>
<div class="cell" style="left:222px;top:310.45px;letter-spacing:0px">Prodotto finale 08</div>
<div class="cell" style="left:385.7px;top:310.45px;letter-spacing:-0.45px">FAB_ITEM...</div>
<div class="cell num lnk" style="left:403.3px;top:310.45px">2.888 UN</div>
<svg class="info" style="left:525.9px;top:309.8px" viewBox="0 0 10 10"><circle cx="5" cy="5" r="4.4" fill="none" stroke="#4f6888" stroke-width="0.8"/><line x1="5" y1="4.2" x2="5" y2="7.6" stroke="#4f6888" stroke-width="0.9"/><circle cx="5" cy="2.7" r="0.55" fill="#4f6888"/></svg>
<div class="cell" style="left:1318px;top:311.45px">UN</div>
<div class="cell" style="left:57.8px;top:332.2px">ITEM009</div>
<div class="cell" style="left:222px;top:332.2px;letter-spacing:0px">Prodotto finale 09</div>
<div class="cell" style="left:385.7px;top:332.2px;letter-spacing:-0.45px">FAB_ITEM...</div>
<div class="cell num lnk" style="left:403.3px;top:332.2px">3.822 UN</div>
<svg class="info" style="left:525.9px;top:331.55px" viewBox="0 0 10 10"><circle cx="5" cy="5" r="4.4" fill="none" stroke="#4f6888" stroke-width="0.8"/><line x1="5" y1="4.2" x2="5" y2="7.6" stroke="#4f6888" stroke-width="0.9"/><circle cx="5" cy="2.7" r="0.55" fill="#4f6888"/></svg>
<div class="cell" style="left:1318px;top:333.2px">UN</div>
<div class="cell" style="left:57.8px;top:353.95px">ITEM009</div>
<div class="cell" style="left:222px;top:353.95px;letter-spacing:0px">Prodotto finale 09</div>
<div class="cell" style="left:385.7px;top:353.95px;letter-spacing:-0.45px">FAB_ITEM...</div>
<div class="cell num lnk" style="left:403.3px;top:353.95px">3.822 UN</div>
<svg class="info" style="left:525.9px;top:353.3px" viewBox="0 0 10 10"><circle cx="5" cy="5" r="4.4" fill="none" stroke="#4f6888" stroke-width="0.8"/><line x1="5" y1="4.2" x2="5" y2="7.6" stroke="#4f6888" stroke-width="0.9"/><circle cx="5" cy="2.7" r="0.55" fill="#4f6888"/></svg>
<div class="cell" style="left:1318px;top:354.95px">UN</div>
</div>
<div class="clip" style="left:562px;top:282.7px;width:748px;height:360.9px">
<div class="cell num" style="left:-34.8px;top:5.95px">4.200</div>
<div class="cell num" style="left:28.88px;top:5.95px">0</div>
<div class="cell num" style="left:92.56px;top:5.95px">0</div>
<div class="cell num" style="left:156.24px;top:5.95px">0</div>
<div class="cell num" style="left:219.92px;top:5.95px">0</div>
<div class="cell num" style="left:283.6px;top:5.95px">0</div>
<div class="cell num" style="left:347.28px;top:5.95px">0</div>
<div class="cell num" style="left:410.96px;top:5.95px">0</div>
<div class="cell num" style="left:474.64px;top:5.95px">0</div>
<div class="cell num" style="left:538.32px;top:5.95px">0</div>
<div class="cell num" style="left:602px;top:5.95px">0</div>
<div class="cell num" style="left:665.68px;top:5.95px">0</div>
<div class="cell num" style="left:-34.8px;top:27.7px">0</div>
<div class="cell num" style="left:28.88px;top:27.7px">28.000</div>
<div class="cell num" style="left:92.56px;top:27.7px">16.000</div>
<div class="cell num" style="left:156.24px;top:27.7px">52.000</div>
<div class="cell num" style="left:219.92px;top:27.7px">16.000</div>
<div class="cell num" style="left:283.6px;top:27.7px">16.000</div>
<div class="cell num" style="left:347.28px;top:27.7px">12.000</div>
<div class="cell num" style="left:410.96px;top:27.7px">24.000</div>
<div class="cell num" style="left:474.64px;top:27.7px">24.000</div>
<div class="cell num" style="left:538.32px;top:27.7px">32.000</div>
<div class="cell num" style="left:602px;top:27.7px">28.000</div>
<div class="cell num" style="left:665.68px;top:27.7px">32.000</div>
<div class="cell num" style="left:-34.8px;top:49.45px">4.200</div>
<div class="cell num" style="left:28.88px;top:49.45px">0</div>
<div class="cell num" style="left:92.56px;top:49.45px">0</div>
<div class="cell num" style="left:156.24px;top:49.45px">0</div>
<div class="cell num" style="left:219.92px;top:49.45px">0</div>
<div class="cell num" style="left:283.6px;top:49.45px">0</div>
<div class="cell num" style="left:347.28px;top:49.45px">0</div>
<div class="cell num" style="left:410.96px;top:49.45px">0</div>
<div class="cell num" style="left:474.64px;top:49.45px">0</div>
<div class="cell num" style="left:538.32px;top:49.45px">0</div>
<div class="cell num" style="left:602px;top:49.45px">0</div>
<div class="cell num" style="left:665.68px;top:49.45px">0</div>
<div class="cell num" style="left:-34.8px;top:71.2px">0</div>
<div class="cell num" style="left:28.88px;top:71.2px">22.000</div>
<div class="cell num" style="left:92.56px;top:71.2px">17.600</div>
<div class="cell num" style="left:156.24px;top:71.2px">48.400</div>
<div class="cell num" style="left:219.92px;top:71.2px">17.600</div>
<div class="cell num" style="left:283.6px;top:71.2px">17.600</div>
<div class="cell num" style="left:347.28px;top:71.2px">22.000</div>
<div class="cell num" style="left:410.96px;top:71.2px">26.400</div>
<div class="cell num" style="left:474.64px;top:71.2px">22.000</div>
<div class="cell num" style="left:538.32px;top:71.2px">35.200</div>
<div class="cell num" style="left:602px;top:71.2px">35.200</div>
<div class="cell num" style="left:665.68px;top:71.2px">30.800</div>
<div class="cell num" style="left:-34.8px;top:92.95px">3.800</div>
<div class="cell num" style="left:28.88px;top:92.95px">0</div>
<div class="cell num" style="left:92.56px;top:92.95px">0</div>
<div class="cell num" style="left:156.24px;top:92.95px">0</div>
<div class="cell num" style="left:219.92px;top:92.95px">0</div>
<div class="cell num" style="left:283.6px;top:92.95px">0</div>
<div class="cell num" style="left:347.28px;top:92.95px">0</div>
<div class="cell num" style="left:410.96px;top:92.95px">0</div>
<div class="cell num" style="left:474.64px;top:92.95px">0</div>
<div class="cell num" style="left:538.32px;top:92.95px">0</div>
<div class="cell num" style="left:602px;top:92.95px">0</div>
<div class="cell num" style="left:665.68px;top:92.95px">0</div>
<div class="cell num" style="left:-34.8px;top:114.7px">0</div>
<div class="cell num" style="left:28.88px;top:114.7px">28.800</div>
<div class="cell num" style="left:92.56px;top:114.7px">14.400</div>
<div class="cell num" style="left:156.24px;top:114.7px">38.400</div>
<div class="cell num" style="left:219.92px;top:114.7px">19.200</div>
<div class="cell num" style="left:283.6px;top:114.7px">19.200</div>
<div class="cell num" style="left:347.28px;top:114.7px">24.000</div>
<div class="cell num" style="left:410.96px;top:114.7px">24.000</div>
<div class="cell num" style="left:474.64px;top:114.7px">24.000</div>
<div class="cell num" style="left:538.32px;top:114.7px">33.600</div>
<div class="cell num" style="left:602px;top:114.7px">38.400</div>
<div class="cell num" style="left:665.68px;top:114.7px">33.600</div>
<div class="cell num" style="left:-34.8px;top:136.45px">4.200</div>
<div class="cell num" style="left:28.88px;top:136.45px">0</div>
<div class="cell num" style="left:92.56px;top:136.45px">0</div>
<div class="cell num" style="left:156.24px;top:136.45px">0</div>
<div class="cell num" style="left:219.92px;top:136.45px">0</div>
<div class="cell num" style="left:283.6px;top:136.45px">0</div>
<div class="cell num" style="left:347.28px;top:136.45px">0</div>
<div class="cell num" style="left:410.96px;top:136.45px">0</div>
<div class="cell num" style="left:474.64px;top:136.45px">0</div>
<div class="cell num" style="left:538.32px;top:136.45px">0</div>
<div class="cell num" style="left:602px;top:136.45px">0</div>
<div class="cell num" style="left:665.68px;top:136.45px">0</div>
<div class="cell num" style="left:-34.8px;top:158.2px">0</div>
<div class="cell num" style="left:28.88px;top:158.2px">27.600</div>
<div class="cell num" style="left:92.56px;top:158.2px">23.000</div>
<div class="cell num" style="left:156.24px;top:158.2px">46.000</div>
<div class="cell num" style="left:219.92px;top:158.2px">23.000</div>
<div class="cell num" style="left:283.6px;top:158.2px">27.600</div>
<div class="cell num" style="left:347.28px;top:158.2px">27.600</div>
<div class="cell num" style="left:410.96px;top:158.2px">27.600</div>
<div class="cell num" style="left:474.64px;top:158.2px">36.800</div>
<div class="cell num" style="left:538.32px;top:158.2px">36.800</div>
<div class="cell num" style="left:602px;top:158.2px">36.800</div>
<div class="cell num" style="left:665.68px;top:158.2px">46.000</div>
<div class="cell num" style="left:-34.8px;top:179.95px">4.000</div>
<div class="cell num" style="left:28.88px;top:179.95px">0</div>
<div class="cell num" style="left:92.56px;top:179.95px">0</div>
<div class="cell num" style="left:156.24px;top:179.95px">0</div>
<div class="cell num" style="left:219.92px;top:179.95px">0</div>
<div class="cell num" style="left:283.6px;top:179.95px">0</div>
<div class="cell num" style="left:347.28px;top:179.95px">0</div>
<div class="cell num" style="left:410.96px;top:179.95px">0</div>
<div class="cell num" style="left:474.64px;top:179.95px">0</div>
<div class="cell num" style="left:538.32px;top:179.95px">0</div>
<div class="cell num" style="left:602px;top:179.95px">0</div>
<div class="cell num" style="left:665.68px;top:179.95px">0</div>
<div class="cell num" style="left:-34.8px;top:201.7px">3.600</div>
<div class="cell num" style="left:28.88px;top:201.7px">0</div>
<div class="cell num" style="left:92.56px;top:201.7px">0</div>
<div class="cell num" style="left:156.24px;top:201.7px">0</div>
<div class="cell num" style="left:219.92px;top:201.7px">0</div>
<div class="cell num" style="left:283.6px;top:201.7px">0</div>
<div class="cell num" style="left:347.28px;top:201.7px">0</div>
<div class="cell num" style="left:410.96px;top:201.7px">0</div>
<div class="cell num" style="left:474.64px;top:201.7px">0</div>
<div class="cell num" style="left:538.32px;top:201.7px">0</div>
<div class="cell num" style="left:602px;top:201.7px">0</div>
<div class="cell num" style="left:665.68px;top:201.7px">0</div>
<div class="cell num" style="left:-34.8px;top:223.45px">0</div>
<div class="cell num" style="left:28.88px;top:223.45px">24.000</div>
<div class="cell num" style="left:92.56px;top:223.45px">19.200</div>
<div class="cell num" style="left:156.24px;top:223.45px">33.600</div>
<div class="cell num" style="left:219.92px;top:223.45px">19.200</div>
<div class="cell num" style="left:283.6px;top:223.45px">19.200</div>
<div class="cell num" style="left:347.28px;top:223.45px">24.000</div>
<div class="cell num" style="left:410.96px;top:223.45px">24.000</div>
<div class="cell num" style="left:474.64px;top:223.45px">24.000</div>
<div class="cell num" style="left:538.32px;top:223.45px">33.600</div>
<div class="cell num" style="left:602px;top:223.45px">33.600</div>
<div class="cell num" style="left:665.68px;top:223.45px">28.800</div>
<div class="cell num" style="left:-34.8px;top:245.2px">3.800</div>
<div class="cell num" style="left:28.88px;top:245.2px">0</div>
<div class="cell num" style="left:92.56px;top:245.2px">0</div>
<div class="cell num" style="left:156.24px;top:245.2px">0</div>
<div class="cell num" style="left:219.92px;top:245.2px">0</div>
<div class="cell num" style="left:283.6px;top:245.2px">0</div>
<div class="cell num" style="left:347.28px;top:245.2px">0</div>
<div class="cell num" style="left:410.96px;top:245.2px">0</div>
<div class="cell num" style="left:474.64px;top:245.2px">0</div>
<div class="cell num" style="left:538.32px;top:245.2px">0</div>
<div class="cell num" style="left:602px;top:245.2px">0</div>
<div class="cell num" style="left:665.68px;top:245.2px">0</div>
<div class="cell num" style="left:-34.8px;top:266.95px">0</div>
<div class="cell num" style="left:28.88px;top:266.95px">25.200</div>
<div class="cell num" style="left:92.56px;top:266.95px">21.000</div>
<div class="cell num" style="left:156.24px;top:266.95px">33.600</div>
<div class="cell num" style="left:219.92px;top:266.95px">16.800</div>
<div class="cell num" style="left:283.6px;top:266.95px">16.800</div>
<div class="cell num" style="left:347.28px;top:266.95px">25.200</div>
<div class="cell num" style="left:410.96px;top:266.95px">25.200</div>
<div class="cell num" style="left:474.64px;top:266.95px">21.000</div>
<div class="cell num" style="left:538.32px;top:266.95px">33.600</div>
<div class="cell num" style="left:602px;top:266.95px">33.600</div>
<div class="cell num" style="left:665.68px;top:266.95px">33.600</div>
<div class="cell num" style="left:-34.8px;top:288.7px">3.800</div>
<div class="cell num" style="left:28.88px;top:288.7px">0</div>
<div class="cell num" style="left:92.56px;top:288.7px">0</div>
<div class="cell num" style="left:156.24px;top:288.7px">0</div>
<div class="cell num" style="left:219.92px;top:288.7px">0</div>
<div class="cell num" style="left:283.6px;top:288.7px">0</div>
<div class="cell num" style="left:347.28px;top:288.7px">0</div>
<div class="cell num" style="left:410.96px;top:288.7px">0</div>
<div class="cell num" style="left:474.64px;top:288.7px">0</div>
<div class="cell num" style="left:538.32px;top:288.7px">0</div>
<div class="cell num" style="left:602px;top:288.7px">0</div>
<div class="cell num" style="left:665.68px;top:288.7px">0</div>
<div class="cell num" style="left:-34.8px;top:310.45px">0</div>
<div class="cell num" style="left:28.88px;top:310.45px">23.000</div>
<div class="cell num" style="left:92.56px;top:310.45px">23.000</div>
<div class="cell num" style="left:156.24px;top:310.45px">41.400</div>
<div class="cell num" style="left:219.92px;top:310.45px">23.000</div>
<div class="cell num" style="left:283.6px;top:310.45px">18.400</div>
<div class="cell num" style="left:347.28px;top:310.45px">27.600</div>
<div class="cell num" style="left:410.96px;top:310.45px">27.600</div>
<div class="cell num" style="left:474.64px;top:310.45px">23.000</div>
<div class="cell num" style="left:538.32px;top:310.45px">32.200</div>
<div class="cell num" style="left:602px;top:310.45px">36.800</div>
<div class="cell num" style="left:665.68px;top:310.45px">32.200</div>
<div class="cell num" style="left:-34.8px;top:332.2px">4.600</div>
<div class="cell num" style="left:28.88px;top:332.2px">0</div>
<div class="cell num" style="left:92.56px;top:332.2px">0</div>
<div class="cell num" style="left:156.24px;top:332.2px">0</div>
<div class="cell num" style="left:219.92px;top:332.2px">0</div>
<div class="cell num" style="left:283.6px;top:332.2px">0</div>
<div class="cell num" style="left:347.28px;top:332.2px">0</div>
<div class="cell num" style="left:410.96px;top:332.2px">0</div>
<div class="cell num" style="left:474.64px;top:332.2px">0</div>
<div class="cell num" style="left:538.32px;top:332.2px">0</div>
<div class="cell num" style="left:602px;top:332.2px">0</div>
<div class="cell num" style="left:665.68px;top:332.2px">0</div>
<div class="cell num" style="left:-34.8px;top:353.95px">0</div>
<div class="cell num" style="left:28.88px;top:353.95px">29.400</div>
<div class="cell num" style="left:92.56px;top:353.95px">12.600</div>
<div class="cell num" style="left:156.24px;top:353.95px">37.800</div>
<div class="cell num" style="left:219.92px;top:353.95px">21.000</div>
<div class="cell num" style="left:283.6px;top:353.95px">16.800</div>
<div class="cell num" style="left:347.28px;top:353.95px">21.000</div>
<div class="cell num" style="left:410.96px;top:353.95px">25.200</div>
<div class="cell num" style="left:474.64px;top:353.95px">21.000</div>
<div class="cell num" style="left:538.32px;top:353.95px">33.600</div>
<div class="cell num" style="left:602px;top:353.95px">33.600</div>
<div class="cell num" style="left:665.68px;top:353.95px">33.600</div>
</div>
<div class="abs" style="left:50px;top:643.6px;width:1310px;height:20.4px;background:#f6f5f9"></div>
<div class="vl" style="left:213.3px;top:643.6px;height:20.4px"></div>
<div class="vl" style="left:376.8px;top:643.6px;height:20.4px"></div>
<div class="vl" style="left:440.7px;top:643.6px;height:20.4px"></div>
<div class="vl" style="left:501px;top:643.6px;height:20.4px"></div>
<div class="vl" style="left:624.9px;top:643.6px;height:20.4px"></div>
<div class="vl" style="left:688.58px;top:643.6px;height:20.4px"></div>
<div class="vl" style="left:752.26px;top:643.6px;height:20.4px"></div>
<div class="vl" style="left:815.94px;top:643.6px;height:20.4px"></div>
<div class="vl" style="left:879.62px;top:643.6px;height:20.4px"></div>
<div class="vl" style="left:943.3px;top:643.6px;height:20.4px"></div>
<div class="vl" style="left:1006.98px;top:643.6px;height:20.4px"></div>
<div class="vl" style="left:1070.66px;top:643.6px;height:20.4px"></div>
<div class="vl" style="left:1134.34px;top:643.6px;height:20.4px"></div>
<div class="vl" style="left:1198.02px;top:643.6px;height:20.4px"></div>
<div class="vl" style="left:1261.7px;top:643.6px;height:20.4px"></div>
<div class="abs" style="left:50px;top:643px;width:1310px;height:1.8px;background:#c6c5cb"></div>
<div class="abs" style="left:50px;top:663.5px;width:1310px;height:1px;background:#e4e3e8"></div>
<div class="cell" style="left:222px;top:649.5px;letter-spacing:0">Totale</div>
<div class="clip" style="left:562px;top:643.6px;width:748px;height:20px">
<div class="cell num" style="left:-34.8px;top:5.9px">449.000</div>
<div class="cell num" style="left:28.88px;top:5.9px">3.596.550</div>
<div class="cell num" style="left:92.56px;top:5.9px">2.584.850</div>
<div class="cell num" style="left:156.24px;top:5.9px">5.640.600</div>
<div class="cell num" style="left:219.92px;top:5.9px">2.608.700</div>
<div class="cell num" style="left:283.6px;top:5.9px">2.689.400</div>
<div class="cell num" style="left:347.28px;top:5.9px">3.444.050</div>
<div class="cell num" style="left:410.96px;top:5.9px">3.615.650</div>
<div class="cell num" style="left:474.64px;top:5.9px">3.477.550</div>
<div class="cell num" style="left:538.32px;top:5.9px">5.064.650</div>
<div class="cell num" style="left:602px;top:5.9px">4.932.800</div>
<div class="cell num" style="left:665.68px;top:5.9px">4.875.650</div>
</div>
<div class="cell" style="left:1318px;top:650.5px">UN</div>
<div class="abs" style="left:561px;top:247.4px;width:1.4px;height:416.6px;background:#a9a8ae"></div>
<div class="abs" style="left:1309px;top:247.4px;width:2px;height:416.6px;background:#c4c3c9"></div>
<div class="abs" style="left:49.5px;top:88px;width:1px;height:576px;background:#e6e5ea"></div>
<div class="abs" style="left:50px;top:245px;width:1310px;height:1px;background:#f9f8fb"></div>
<div class="abs" style="left:1360px;top:245.4px;width:12px;height:429.6px;background:#fbfbfd"></div>
<svg class="abs" style="left:1362px;top:252px" width="9" height="7" viewBox="0 0 9 7"><path d="M4.5 0.8 L8.2 6 H0.8 Z" fill="#7b7a80"/></svg>
<div class="abs" style="left:1363px;top:265.4px;width:6.8px;height:123.4px;border-radius:3.4px;background:#88878d"></div>
<svg class="abs" style="left:1362px;top:652px" width="9" height="7" viewBox="0 0 9 7"><path d="M0.8 1 H8.2 L4.5 6.2 Z" fill="#7b7a80"/></svg>
<svg class="abs" style="left:55px;top:667px" width="7" height="9" viewBox="0 0 7 9"><path d="M6 0.8 V8.2 L0.8 4.5 Z" fill="#7b7a80"/></svg>
<div class="abs" style="left:68px;top:667.5px;width:1200.7px;height:6.8px;border-radius:3.4px;background:#88878d"></div>
<svg class="abs" style="left:1348px;top:667px" width="7" height="9" viewBox="0 0 7 9"><path d="M1 0.8 V8.2 L6.2 4.5 Z" fill="#7b7a80"/></svg>
</body></html>
